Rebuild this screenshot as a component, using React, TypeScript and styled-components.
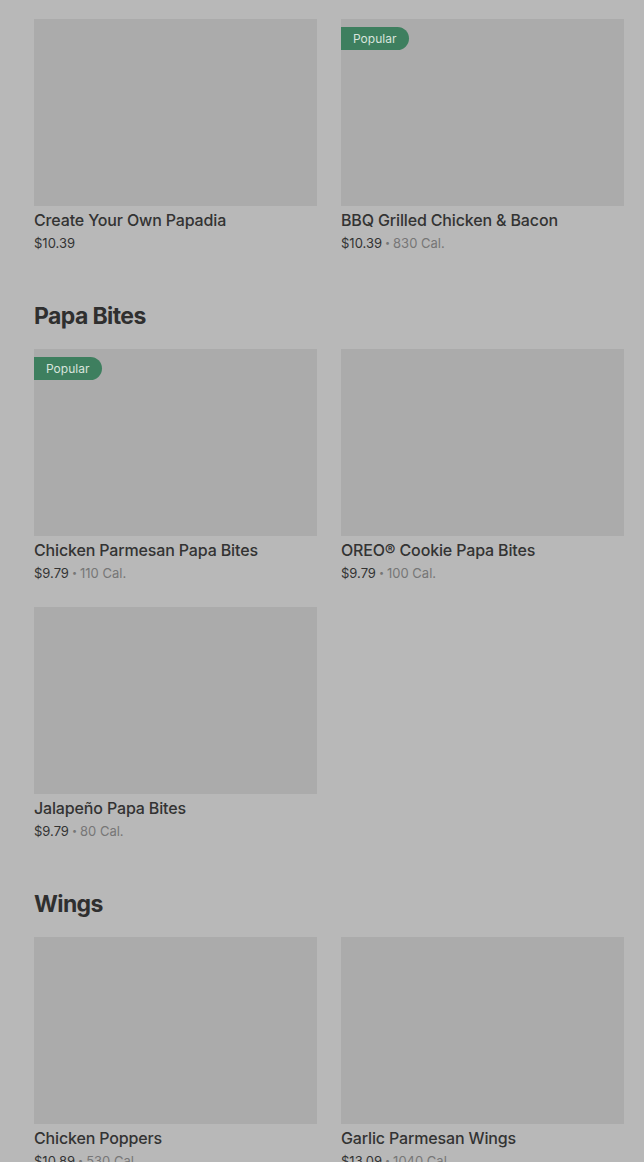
import React from "react";
import styled, { createGlobalStyle } from "styled-components";

const Global = createGlobalStyle`
  html, body { margin: 0; padding: 0; background: #b8b8b8; }
  body { font-family: Inter, "Noto Sans", sans-serif; color: #333; }
`;

const Page = styled.main`
  padding: 19px 20px 0 34px;
  display: flex;
  flex-direction: column;
  gap: 46px;
  height: 1162px;
  overflow: hidden;
  box-sizing: border-box;
`;

const Section = styled.section`
  display: flex;
  flex-direction: column;
  gap: 17px;
`;

const Heading = styled.h2`
  margin: 0;
  font-size: 23px;
  line-height: 32px;
  font-weight: 700;
  letter-spacing: -0.6px;
  color: #2f2f2f;
`;

const Grid = styled.div`
  display: grid;
  grid-template-columns: 283px 283px;
  column-gap: 24px;
  row-gap: 23px;
`;

const Card = styled.article`
  display: flex;
  flex-direction: column;
`;

const Thumb = styled.div`
  position: relative;
  height: 187px;
  background: #ababab;
`;

const Badge = styled.span`
  position: absolute;
  left: 0;
  top: 8px;
  height: 23px;
  padding: 0 13px 0 12px;
  display: flex;
  align-items: center;
  background: #3e7f5f;
  color: #d9e4dd;
  font-size: 12px;
  border-radius: 0 12px 12px 0;
`;

const Title = styled.div`
  margin-top: 2px;
  font-size: 16px;
  line-height: 24px;
  font-weight: 500;
  letter-spacing: -0.15px;
  color: #333;
`;

const Meta = styled.div`
  font-size: 13px;
  line-height: 22px;
  color: #333;
  display: flex;
  align-items: center;
  gap: 3px;
`;

const Cal = styled.span`
  color: #767676;
`;

const Dot = styled.span`
  color: #767676;
  font-size: 9px;
`;

type Item = { name: string; price: string; cal?: string; popular?: boolean };

const sections: { title?: string; items: Item[] }[] = [
  {
    items: [
      { name: "Create Your Own Papadia", price: "$10.39" },
      { name: "BBQ Grilled Chicken & Bacon", price: "$10.39", cal: "830 Cal.", popular: true },
    ],
  },
  {
    title: "Papa Bites",
    items: [
      { name: "Chicken Parmesan Papa Bites", price: "$9.79", cal: "110 Cal.", popular: true },
      { name: "OREO® Cookie Papa Bites", price: "$9.79", cal: "100 Cal." },
      { name: "Jalapeño Papa Bites", price: "$9.79", cal: "80 Cal." },
    ],
  },
  {
    title: "Wings",
    items: [
      { name: "Chicken Poppers", price: "$10.89", cal: "530 Cal." },
      { name: "Garlic Parmesan Wings", price: "$13.09", cal: "1040 Cal." },
    ],
  },
];

export default function App() {
  return (
    <>
      <Global />
      <Page>
        {sections.map((s, i) => (
          <Section key={i}>
            {s.title && <Heading>{s.title}</Heading>}
            <Grid>
              {s.items.map((it) => (
                <Card key={it.name}>
                  <Thumb>{it.popular && <Badge>Popular</Badge>}</Thumb>
                  <Title>{it.name}</Title>
                  <Meta>
                    <span>{it.price}</span>
                    {it.cal && (
                      <>
                        <Dot>•</Dot>
                        <Cal>{it.cal}</Cal>
                      </>
                    )}
                  </Meta>
                </Card>
              ))}
            </Grid>
          </Section>
        ))}
      </Page>
    </>
  );
}
